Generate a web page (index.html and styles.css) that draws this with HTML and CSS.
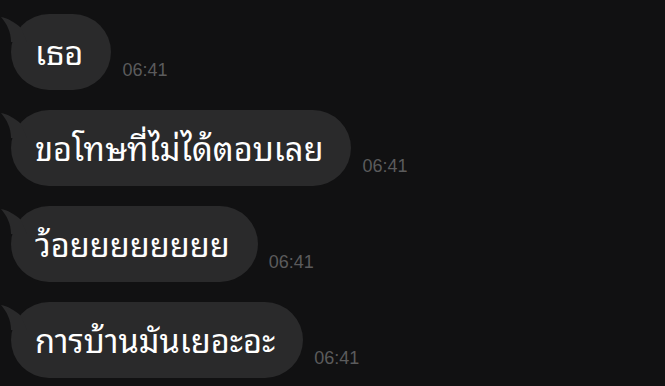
FILE: index.html
```html
<!DOCTYPE html>
<html lang="th">
<head>
    <meta charset="UTF-8">
    <meta name="viewport" content="width=device-width, initial-scale=1.0">
    <title>Chat</title>
    <link rel="stylesheet" href="styles.css">
</head>
<body>

<div class="chat">
    <!-- incoming messages -->
    <div class="row">
        <div class="bubble">เธอ</div>
        <span class="time">06:41</span>
    </div>
    <div class="row">
        <div class="bubble">ขอโทษที่ไม่ได้ตอบเลย</div>
        <span class="time">06:41</span>
    </div>
    <div class="row">
        <div class="bubble">ว้อยยยยยยยย</div>
        <span class="time">06:41</span>
    </div>
    <div class="row">
        <div class="bubble">การบ้านมันเยอะอะ</div>
        <span class="time">06:41</span>
    </div>
</div>

</body>
</html>
```

FILE: styles.css
```css
body {
    margin: 0;
    padding: 0;
    background-color: #111112;
    font-family: "Noto Sans Thai Looped", "Noto Sans Thai", "Noto Sans", sans-serif;
    overflow: hidden;
}

.chat {
    display: flex;
    flex-direction: column;
    gap: 20px;
    padding: 14px 0 0 11px;
}

.row {
    display: flex;
    align-items: flex-end;
    gap: 11px;
}

.bubble {
    position: relative;
    height: 76px;
    box-sizing: border-box;
    display: flex;
    align-items: center;
    padding: 0 28px 4px 24px;
    background-color: #2a2a2b;
    border-radius: 38px;
    color: #ffffff;
    font-size: 32.6px;
    white-space: nowrap;
}

/* little tail at top left */
.bubble::before {
    content: "";
    position: absolute;
    left: -10px;
    top: 2px;
    width: 26px;
    height: 26px;
    background-color: #2a2a2b;
    clip-path: path("M0 1 C6 2 14 6 20 12 L26 26 L10 26 C10 16 6 8 0 1 Z");
}

.time {
    margin-bottom: 9px;
    color: #5b5b5c;
    font-family: "Liberation Sans", Arial, sans-serif;
    font-size: 18px;
}
```
